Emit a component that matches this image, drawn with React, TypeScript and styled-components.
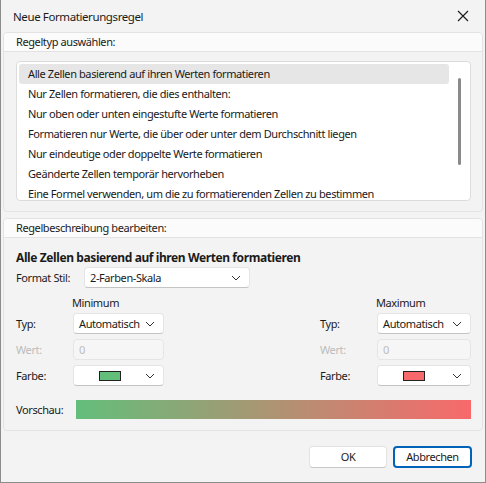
import React from "react";
import styled, { createGlobalStyle } from "styled-components";

const GlobalStyle = createGlobalStyle`
  html, body {
    margin: 0;
    padding: 0;
    background: #f3f3f3;
  }
  body {
    font-family: "Segoe UI", "Noto Sans", sans-serif;
    font-size: 11px;
    letter-spacing: -0.4px;
    color: #1a1a1a;
  }
`;

const ruleTypes = [
  "Alle Zellen basierend auf ihren Werten formatieren",
  "Nur Zellen formatieren, die dies enthalten:",
  "Nur oben oder unten eingestufte Werte formatieren",
  "Formatieren nur Werte, die über oder unter dem Durchschnitt liegen",
  "Nur eindeutige oder doppelte Werte formatieren",
  "Geänderte Zellen temporär hervorheben",
  "Eine Formel verwenden, um die zu formatierenden Zellen zu bestimmen",
];

const Chevron = () => (
  <svg width="10" height="6" viewBox="0 0 10 6" fill="none">
    <path d="M1 1l4 4 4-4" stroke="#333" strokeWidth="1" />
  </svg>
);

const CloseIcon = () => (
  <svg width="12" height="12" viewBox="0 0 12 12" fill="none">
    <path d="M1 1l10 10M11 1L1 11" stroke="#1a1a1a" strokeWidth="1.1" />
  </svg>
);

export default function App() {
  return (
    <>
      <GlobalStyle />
      <Window>
        <TitleBar>
          <Title>Neue Formatierungsregel</Title>
          <CloseButton>
            <CloseIcon />
          </CloseButton>
        </TitleBar>

        <Panel>
          <PanelHeader>Regeltyp auswählen:</PanelHeader>
          <ListBody>
            <ListBox>
              <ListItems>
                {ruleTypes.map((t, i) => (
                  <ListItem key={t} $selected={i === 0}>
                    {t}
                  </ListItem>
                ))}
              </ListItems>
              <ScrollTrack>
                <ScrollThumb />
              </ScrollTrack>
            </ListBox>
          </ListBody>
        </Panel>

        <Panel>
          <PanelHeader>Regelbeschreibung bearbeiten:</PanelHeader>
          <DescBody>
            <Heading>Alle Zellen basierend auf ihren Werten formatieren</Heading>
            <StyleRow>
              <Label>Format Stil:</Label>
              <Select $width={166}>
                <span>2-Farben-Skala</span>
                <Chevron />
              </Select>
            </StyleRow>

            <Columns>
              <Column>
                <ColumnTitle>Minimum</ColumnTitle>
                <FieldGrid>
                  <Label>Typ:</Label>
                  <Select $width={91}>
                    <span>Automatisch</span>
                    <Chevron />
                  </Select>
                  <Label $disabled>Wert:</Label>
                  <TextInput>0</TextInput>
                  <Label>Farbe:</Label>
                  <Select $width={91}>
                    <Swatch $color="#63be7b" />
                    <Chevron />
                  </Select>
                </FieldGrid>
              </Column>
              <Column>
                <ColumnTitle>Maximum</ColumnTitle>
                <FieldGrid>
                  <Label>Typ:</Label>
                  <Select $width={94}>
                    <span>Automatisch</span>
                    <Chevron />
                  </Select>
                  <Label $disabled>Wert:</Label>
                  <TextInput>0</TextInput>
                  <Label>Farbe:</Label>
                  <Select $width={94}>
                    <Swatch $color="#f8696b" />
                    <Chevron />
                  </Select>
                </FieldGrid>
              </Column>
            </Columns>

            <PreviewRow>
              <Label>Vorschau:</Label>
              <Gradient />
            </PreviewRow>
          </DescBody>
        </Panel>

        <Footer>
          <Button>OK</Button>
          <Button $primary>Abbrechen</Button>
        </Footer>
      </Window>
    </>
  );
}

const Window = styled.div`
  box-sizing: border-box;
  width: 486px;
  height: 483px;
  display: flex;
  flex-direction: column;
  background: #f3f3f3;
  border: 1px solid #8c8c8c;
  border-top: none;
`;

const TitleBar = styled.div`
  height: 32px;
  flex: none;
  display: flex;
  align-items: center;
  justify-content: space-between;
  padding: 0 16px 0 12px;
`;

const Title = styled.div`
  font-size: 11.5px;
  color: #1a1a1a;
`;

const CloseButton = styled.div`
  display: flex;
  align-items: center;
`;

const Panel = styled.div`
  margin: 0 2px;
  border: 1px solid #e3e3e3;
  border-radius: 4px;
  overflow: hidden;
  background: #f3f3f3;
  & + & {
    margin-top: 6px;
  }
`;

const PanelHeader = styled.div`
  height: 18px;
  line-height: 18px;
  padding-left: 12px;
  background: #fbfbfb;
  border-bottom: 1px solid #e3e3e3;
`;

const ListBody = styled.div`
  padding: 9px 11px 10px 12px;
`;

const ListBox = styled.div`
  height: 138px;
  border: 1px solid #dcdcdc;
  border-radius: 4px;
  background: #fff;
  display: flex;
  overflow: hidden;
`;

const ListItems = styled.div`
  flex: 1;
  padding: 2px 0 0 2px;
`;

const ListItem = styled.div<{ $selected?: boolean }>`
  height: 20px;
  line-height: 19px;
  padding-left: 9px;
  border-radius: 3px;
  white-space: nowrap;
  background: ${(p) => (p.$selected ? "#e6e6e6" : "transparent")};
`;

const ScrollTrack = styled.div`
  width: 21px;
  padding-top: 16px;
  display: flex;
  justify-content: center;
`;

const ScrollThumb = styled.div`
  width: 3px;
  height: 87px;
  border-radius: 2px;
  background: #8a8a8a;
`;

const DescBody = styled.div`
  padding: 12px 11px 11px 12px;
`;

const Heading = styled.div`
  font-weight: 700;
  font-size: 12px;
  line-height: 16px;
`;

const StyleRow = styled.div`
  display: grid;
  grid-template-columns: 68px auto;
  align-items: center;
  margin-top: 1px;
`;

const Label = styled.span<{ $disabled?: boolean }>`
  color: ${(p) => (p.$disabled ? "#bcbcbc" : "#1a1a1a")};
  white-space: nowrap;
`;

const Select = styled.div<{ $width: number }>`
  box-sizing: border-box;
  width: ${(p) => p.$width}px;
  height: 21px;
  background: #fff;
  border: 1px solid #e5e5e5;
  border-bottom-color: #c4c4c4;
  border-radius: 4px;
  display: flex;
  align-items: center;
  justify-content: space-between;
  padding: 0 8px 0 5px;
`;

const Columns = styled.div`
  display: flex;
  justify-content: space-between;
  margin-top: 8px;
`;

const Column = styled.div`
  display: flex;
  flex-direction: column;
`;

const ColumnTitle = styled.div`
  padding-left: 56px;
  line-height: 14px;
`;

const FieldGrid = styled.div`
  display: grid;
  grid-template-columns: 57px auto;
  row-gap: 5px;
  align-items: center;
  margin-top: 3px;
`;

const TextInput = styled.div`
  box-sizing: border-box;
  height: 21px;
  border: 1px solid #e5e5e5;
  border-radius: 4px;
  background: #f6f6f6;
  color: #bcbcbc;
  padding-left: 5px;
  line-height: 19px;
`;

const Swatch = styled.span<{ $color: string }>`
  box-sizing: border-box;
  width: 22px;
  height: 10px;
  margin-left: 20px;
  background: ${(p) => p.$color};
  border: 1px solid #222;
`;

const PreviewRow = styled.div`
  display: grid;
  grid-template-columns: 60px 1fr;
  align-items: center;
  margin-top: 14px;
`;

const Gradient = styled.div`
  height: 19px;
  background: linear-gradient(to right, #63be7b, #f8696b);
`;

const Footer = styled.div`
  flex: 1;
  display: flex;
  justify-content: flex-end;
  align-items: center;
  gap: 6px;
  padding-right: 13px;
`;

const Button = styled.div<{ $primary?: boolean }>`
  box-sizing: border-box;
  width: ${(p) => (p.$primary ? 79 : 78)}px;
  height: 22px;
  display: flex;
  align-items: center;
  justify-content: center;
  background: #fff;
  border-radius: 4px;
  border: ${(p) => (p.$primary ? "2px solid #0063b8" : "1px solid #e3e3e3")};
  border-bottom-color: ${(p) => (p.$primary ? "#0063b8" : "#c8c8c8")};
`;
